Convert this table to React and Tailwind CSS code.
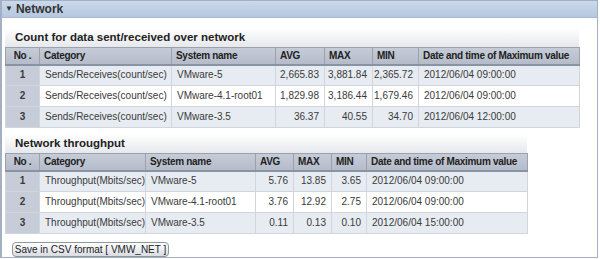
import React from 'react';

const sent = {
  title: 'Count for data sent/received over network',
  widths: [34, 132, 104, 49, 48, 46, 161],
  rows: [
    ['1', 'Sends/Receives(count/sec)', 'VMware-5', '2,665.83', '3,881.84', '2,365.72', '2012/06/04 09:00:00'],
    ['2', 'Sends/Receives(count/sec)', 'VMware-4.1-root01', '1,829.98', '3,186.44', '1,679.46', '2012/06/04 09:00:00'],
    ['3', 'Sends/Receives(count/sec)', 'VMware-3.5', '36.37', '40.55', '34.70', '2012/06/04 12:00:00'],
  ],
};

const throughput = {
  title: 'Network throughput',
  widths: [34, 106, 110, 38, 38, 35, 161],
  rows: [
    ['1', 'Throughput(Mbits/sec)', 'VMware-5', '5.76', '13.85', '3.65', '2012/06/04 09:00:00'],
    ['2', 'Throughput(Mbits/sec)', 'VMware-4.1-root01', '3.76', '12.92', '2.75', '2012/06/04 09:00:00'],
    ['3', 'Throughput(Mbits/sec)', 'VMware-3.5', '0.11', '0.13', '0.10', '2012/06/04 15:00:00'],
  ],
};

const heads = ['No .', 'Category', 'System name', 'AVG', 'MAX', 'MIN', 'Date and time of Maximum value'];

const StatTable = ({ data }) => {
  const total = data.widths.reduce((a, b) => a + b, 0);
  return (
    <div style={{ width: total }}>
      <div className="h-[19px] flex items-end pl-[10px] pb-[1px] bg-gradient-to-b from-white to-[#e6e8ec] text-[11.5px] font-bold text-[#222] whitespace-nowrap">
        {data.title}
      </div>
      <table className="table-fixed border-collapse text-[10px] text-[#3a3a3a] whitespace-nowrap" style={{ width: total }}>
        <colgroup>
          {data.widths.map((w, i) => (
            <col key={i} style={{ width: w }} />
          ))}
        </colgroup>
        <thead>
          <tr className="h-[17px] bg-gradient-to-b from-[#c6ccd7] to-[#b4bbc8]">
            {heads.map((h, i) => (
              <th
                key={h}
                className={`font-bold text-[#222] tracking-[-0.3px] border border-[#9aa2b0] border-b-2 border-b-[#8a93a3] px-[4px] py-0 leading-none overflow-hidden ${i === 0 ? 'text-center' : 'text-left'}`}
              >
                {h}
              </th>
            ))}
          </tr>
        </thead>
        <tbody>
          {data.rows.map((r, ri) => (
            <tr key={ri} className={`h-[21px] ${ri % 2 === 0 ? 'bg-[#e7ecf2]' : 'bg-white'}`}>
              {r.map((c, ci) => (
                <td
                  key={ci}
                  className={
                    ci === 0
                      ? 'bg-[#c7cdd8] text-center font-bold border border-[#d2d6dc] p-0 leading-none'
                      : ci >= 3 && ci <= 5
                      ? 'text-right pr-[5px] border border-[#d2d6dc] p-0 leading-none'
                      : 'text-left pl-[5px] border border-[#d2d6dc] p-0 leading-none'
                  }
                >
                  {c}
                </td>
              ))}
            </tr>
          ))}
        </tbody>
      </table>
    </div>
  );
};

export default function App() {
  return (
    <div className="w-[600px] h-[259px] bg-white" style={{ fontFamily: '"Liberation Sans", Arial, sans-serif' }}>
      <div className="w-[598px] h-[258px] border border-l-2 border-[#a3b0c4] flex flex-col">
        <div className="h-[17px] flex items-center gap-[3px] pl-[3px] bg-gradient-to-b from-[#cbd9eb] to-[#b5c8e0] border-b border-[#a9bad2] text-[12px] font-bold text-[#333]">
          <span className="text-[8px]">▼</span>
          <span>Network</span>
        </div>
        <div className="flex flex-col pl-[3px] pt-[10px]">
          <StatTable data={sent} />
          <div className="h-[6px]" />
          <StatTable data={throughput} />
          <div className="pl-[7px] pt-[8px]">
            <button className="h-[15px] w-[157px] flex items-center justify-center rounded-[4px] border border-[#8e96a2] bg-gradient-to-b from-white to-[#d9dce2] text-[10px] text-[#222] leading-none whitespace-nowrap">
              Save in CSV format [ VMW_NET ]
            </button>
          </div>
        </div>
      </div>
    </div>
  );
}
